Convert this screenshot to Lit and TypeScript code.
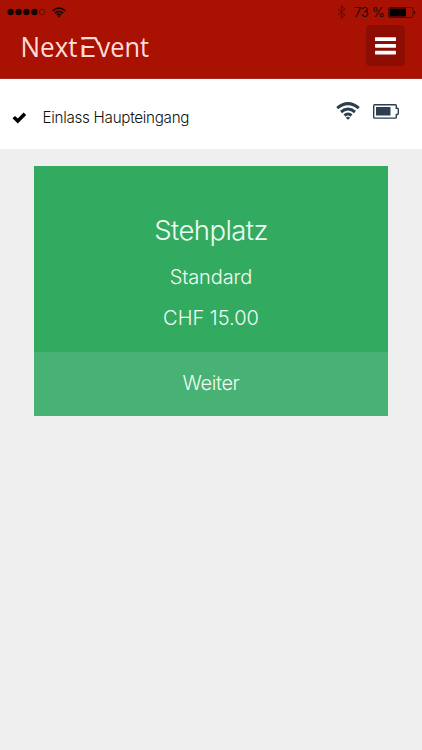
import { LitElement, html, css, svg } from "lit";
import { customElement, property } from "lit/decorators.js";

const bars = svg`<path d="M1.2 6.2Q12 -2.9 22.8 6.2M5 10Q12 4 19 10M8.5 13.5Q12 10.5 15.5 13.5" fill="none" stroke="currentColor" stroke-width="3"/><path d="M12 17.8l-2.3-2.1q2.3-1.7 4.6 0z" fill="currentColor"/>`;

@customElement("status-bar")
class StatusBar extends LitElement {
  static styles = css`
    :host { display: flex; align-items: center; height: 24px; padding: 0 6px 0 7px; color: #180504; box-sizing: border-box; }
    svg { display: block; flex: none; }
    .wifi { margin-left: 6px; }
    .bt { margin-left: auto; color: #6f0c04; }
    .pct { font: 400 13px/24px Inter, sans-serif; margin: 0 3px 0 8px; width: 31px; white-space: nowrap; letter-spacing: -0.3px; color: #260604; }
  `;
  render() {
    return html`
      <svg width="39" height="8" viewBox="0 0 39 8">
        ${[3.7, 11.6, 19.5, 27.4].map((x) => svg`<circle cx=${x} cy="4" r="3.2" fill="currentColor"/>`)}
        <circle cx="35.2" cy="4" r="2.8" fill="none" stroke="#430804" stroke-width=".7"/>
      </svg>
      <svg class="wifi" width="14" height="11" viewBox="0 0 24 18">${bars}</svg>
      <svg class="bt" width="9" height="14" viewBox="0 0 9 14"><path d="M.8 3.8L8 10 4.4 13V1L8 4 .8 10.2" fill="none" stroke="currentColor" stroke-width="1.1"/></svg>
      <span class="pct">73 %</span>
      <svg width="28" height="11" viewBox="0 0 28 11"><rect x=".5" y=".5" width="24.5" height="10" rx="1.5" fill="none" stroke="#430804" stroke-width=".8"/><path d="M1.5 1.5h16.5v8H1.5z" fill="#000"/><path d="M26.2 3.4q2.2 2.1 0 4.2z" fill="currentColor"/></svg>
    `;
  }
}

@customElement("ticket-card")
class TicketCard extends LitElement {
  @property() name = "";
  @property() category = "";
  @property() price = "";
  static styles = css`
    :host { display: block; margin: 17px 34px 0; color: #effbf3; background: #32ab61; font-family: Inter, "Liberation Sans", sans-serif; font-weight: 300; text-align: center; }
    .info { height: 186px; padding-top: 46px; box-sizing: border-box; }
    .name { font-size: 27.5px; line-height: 36px; letter-spacing: -0.55px; }
    .category, .price { font-size: 20px; line-height: 28px; }
    .category { margin-top: 15px; letter-spacing: -0.1px; }
    .price { margin-top: 13px; }
    .next { display: block; width: 100%; height: 64px; padding: 0 0 2px; border: 0; background: #47b273; color: inherit; font: inherit; font-size: 20px; letter-spacing: -0.4px; }
  `;
  render() {
    return html`
      <div class="info">
        <div class="name">${this.name}</div>
        <div class="category">${this.category}</div>
        <div class="price">${this.price}</div>
      </div>
      <button class="next">Weiter</button>
    `;
  }
}

@customElement("app-root")
class AppRoot extends LitElement {
  static styles = css`
    :host { display: block; height: 750px; background: #efefef; overflow: hidden; }
    svg { display: block; flex: none; }
    header { height: 79px; background: #a91103; box-sizing: border-box; border-bottom: 1px solid #a52a20; }
    .brand { display: flex; justify-content: space-between; padding: 1px 17px 0 20px; }
    .logo { overflow: visible; }
    .logo text { font-family: "Open Sans", sans-serif; font-size: 28px; font-weight: 400; fill: #ffdcd9; }
    .menu { width: 39px; height: 41px; padding: 0; border: 0; border-radius: 4px; background: #8e0d03; display: grid; place-items: center; }
    .gate { display: flex; align-items: center; height: 70px; padding: 0 23px 0 12px; background: #fff; box-sizing: border-box; }
    .label { margin-left: 15.5px; padding-top: 7px; font: 300 15.2px/20px Inter, "Liberation Sans", sans-serif; color: #111; letter-spacing: -0.28px; }
    .check { margin-top: 7px; }
    .state { display: flex; gap: 13px; align-items: center; margin: -6px 0 0 auto; color: #2c3e50; }
  `;
  render() {
    return html`
      <header>
        <status-bar></status-bar>
        <div class="brand">
          <svg class="logo" width="134" height="48" viewBox="0 0 134 48">
            <text x="0.5" y="32" textLength="57" lengthAdjust="spacingAndGlyphs">Next</text>
            <text x="58.5" y="32" textLength="18" lengthAdjust="spacingAndGlyphs">E</text>
            <text x="77.5" y="32" textLength="51.5" lengthAdjust="spacingAndGlyphs">vent</text>
            <path d="M60 14.5h5v5.5h-5z" fill="#a91103"/>
            <path d="M61.5 13.2H75.5L79 20" fill="none" stroke="#ffdcd9" stroke-width="2.2"/>
          </svg>
          <button class="menu" aria-label="Menu">
            <svg width="21" height="18" viewBox="0 0 21 18"><rect y=".3" width="21" height="3.7" rx=".6" fill="#fff"/><rect y="7" width="21" height="3.7" rx=".6" fill="#fff"/><rect y="13.7" width="21" height="3.7" rx=".6" fill="#fff"/></svg>
          </button>
        </div>
      </header>
      <section class="gate">
        <svg class="check" width="15" height="12" viewBox="0 0 15 12"><path d="M.5 6.3L3 3.9 5.8 6.4 11.6.4 14.2 2.9 5.8 11.4z" fill="#000"/></svg>
        <span class="label">Einlass Haupteingang</span>
        <div class="state">
          <svg width="24" height="18" viewBox="0 0 24 18">${bars}</svg>
          <svg width="26" height="15" viewBox="0 0 26 15"><path d="M1.5.8h21q.8 0 .8.8v2.7h1q1 0 1 1v4.2q0 1-1 1h-1v2.8q0 .8-.8.8h-21q-.8 0-.8-.8V1.6q0-.8.8-.8z" fill="none" stroke="currentColor" stroke-width="1.4"/><path d="M3 3h14.5v8.5H3z" fill="currentColor"/></svg>
        </div>
      </section>
      <ticket-card name="Stehplatz" category="Standard" price="CHF 15.00"></ticket-card>
    `;
  }
}
